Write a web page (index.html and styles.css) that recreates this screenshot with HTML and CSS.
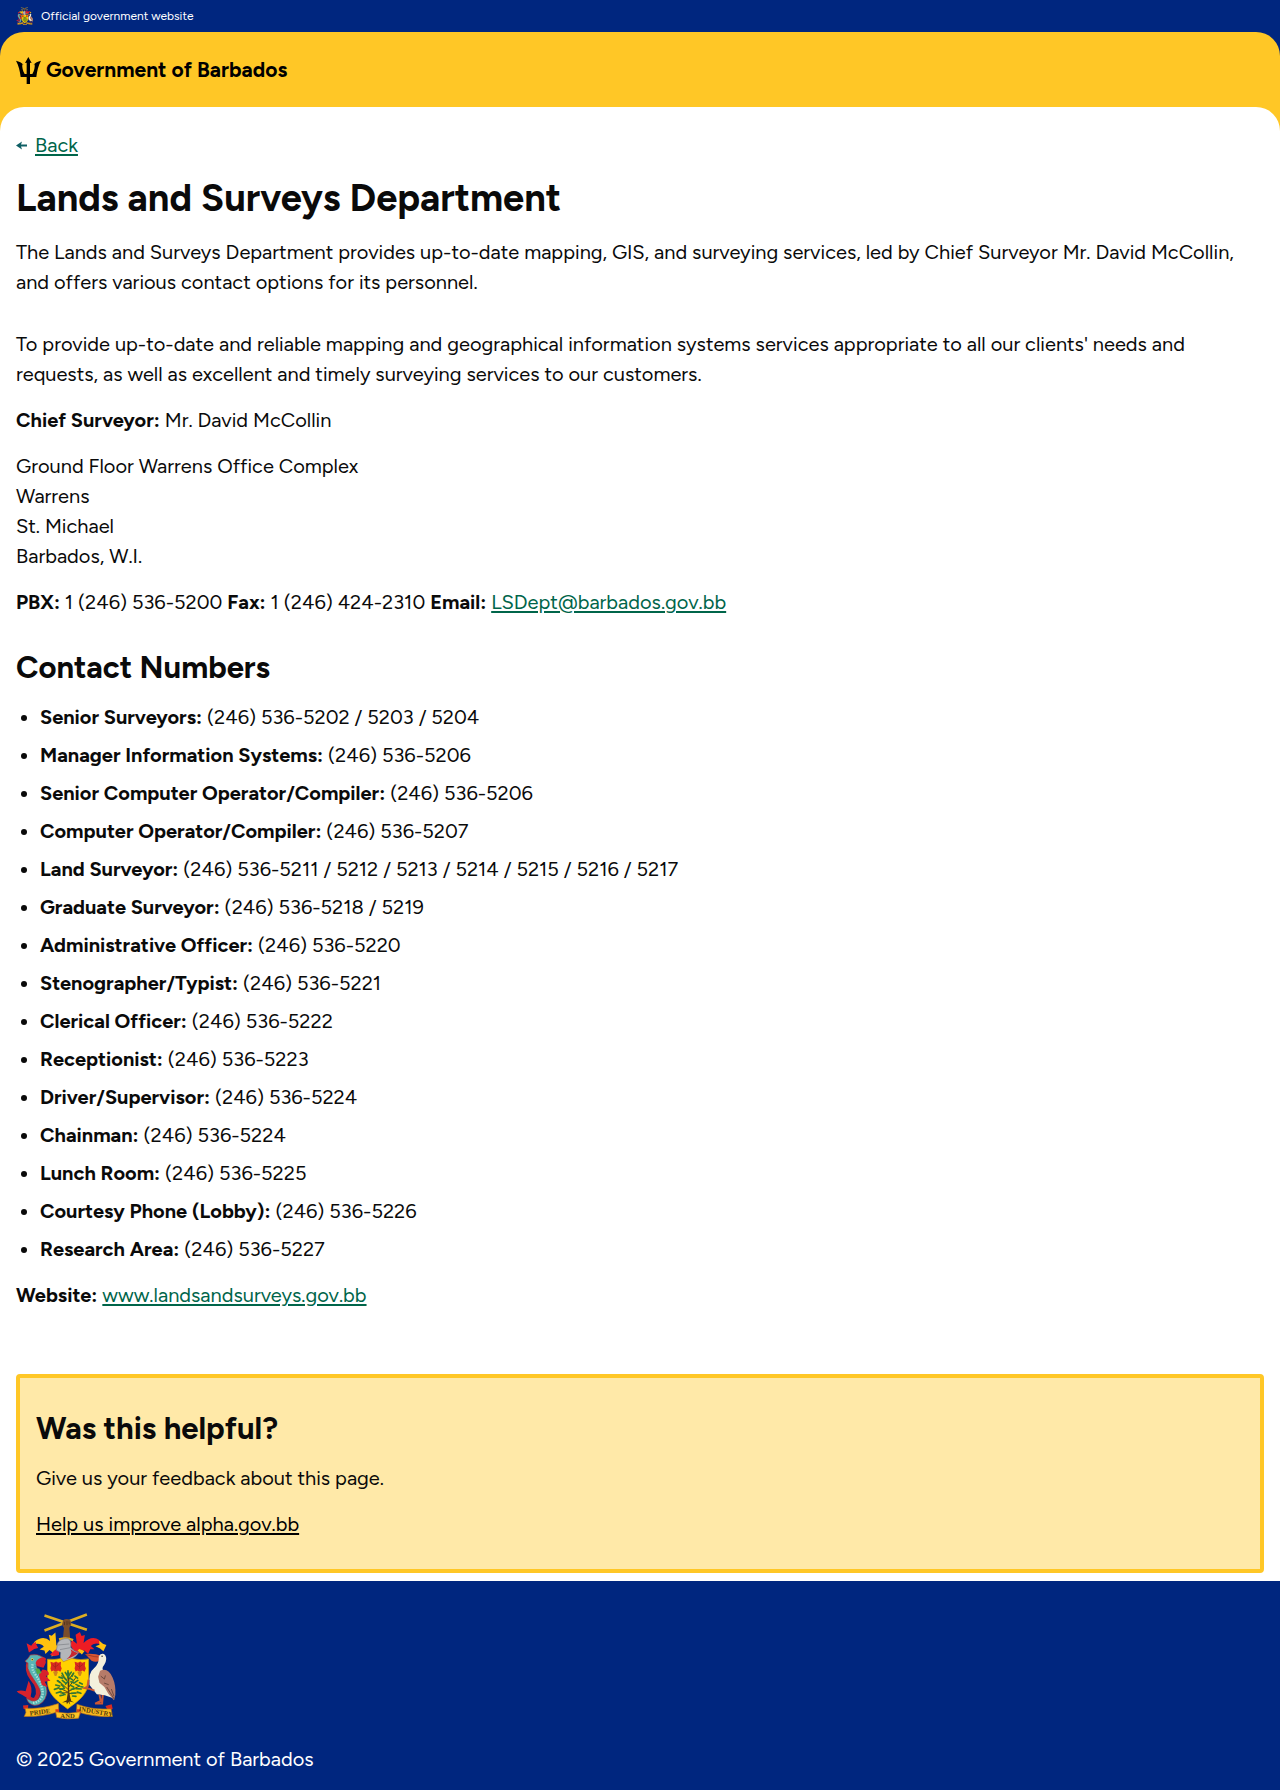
FILE: index.html
```html
<!DOCTYPE html>
<html lang="en">
<head>
<meta charset="utf-8">
<meta name="viewport" content="width=device-width, initial-scale=1">
<title>Lands and Surveys Department</title>
<link rel="stylesheet" href="styles.css">
</head>
<body>
<div class="official">
  <svg class="official-crest" viewBox="48 40 302 322" aria-hidden="true"><use href="#crest"/></svg>
  <span>Official government website</span>
</div>
<div class="header-wrap">
  <header class="header">
    <a class="brand" href="#">
      <svg class="trident" viewBox="0 0 75 81" aria-hidden="true">
        <path d="M37 0 L47 18 L42 17 V51 H49 C55 42 57 31 56 22 L52 24 C58 17 65 13 75 11 C67 26 63 42 61 60 H42 V81 H32 V60 H14 C12 42 8 26 0 11 C10 13 17 17 23 24 L19 22 C18 31 20 42 26 51 H32 V17 L27 18 Z"/>
      </svg>
      <span>Government of Barbados</span>
    </a>
  </header>
</div>
<div class="main-wrap">
  <main class="main">
    <nav class="back">
      <svg class="back-arrow" viewBox="0 0 11 9" aria-hidden="true"><path d="M0 4.5 L6 0.5 L5 3.5 H11 V5.5 H5 L6 8.5 Z"/></svg>
      <a href="#">Back</a>
    </nav>
    <h1>Lands and Surveys Department</h1>
    <p class="lead">The Lands and Surveys Department provides up-to-date mapping, GIS, and surveying services, led by Chief Surveyor Mr. David McCollin, and offers various contact options for its personnel.</p>
    <p>To provide up-to-date and reliable mapping and geographical information systems services appropriate to all our clients' needs and requests, as well as excellent and timely surveying services to our customers.</p>
    <p><strong>Chief Surveyor:</strong> Mr. David McCollin</p>
    <p>Ground Floor Warrens Office Complex<br>Warrens<br>St. Michael<br>Barbados, W.I.</p>
    <p><strong>PBX:</strong> 1 (246) 536-5200 <strong>Fax:</strong> 1 (246) 424-2310 <strong>Email:</strong> <a href="mailto:LSDept@barbados.gov.bb">LSDept@barbados.gov.bb</a></p>
    <h2 class="section-title">Contact Numbers</h2>
    <ul class="contacts">
      <li><strong>Senior Surveyors:</strong> (246) 536-5202 / 5203 / 5204</li>
      <li><strong>Manager Information Systems:</strong> (246) 536-5206</li>
      <li><strong>Senior Computer Operator/Compiler:</strong> (246) 536-5206</li>
      <li><strong>Computer Operator/Compiler:</strong> (246) 536-5207</li>
      <li><strong>Land Surveyor:</strong> (246) 536-5211 / 5212 / 5213 / 5214 / 5215 / 5216 / 5217</li>
      <li><strong>Graduate Surveyor:</strong> (246) 536-5218 / 5219</li>
      <li><strong>Administrative Officer:</strong> (246) 536-5220</li>
      <li><strong>Stenographer/Typist:</strong> (246) 536-5221</li>
      <li><strong>Clerical Officer:</strong> (246) 536-5222</li>
      <li><strong>Receptionist:</strong> (246) 536-5223</li>
      <li><strong>Driver/Supervisor:</strong> (246) 536-5224</li>
      <li><strong>Chainman:</strong> (246) 536-5224</li>
      <li><strong>Lunch Room:</strong> (246) 536-5225</li>
      <li><strong>Courtesy Phone (Lobby):</strong> (246) 536-5226</li>
      <li><strong>Research Area:</strong> (246) 536-5227</li>
    </ul>
    <p><strong>Website:</strong> <a href="#">www.landsandsurveys.gov.bb</a></p>
    <section class="feedback">
      <h2>Was this helpful?</h2>
      <p>Give us your feedback about this page.</p>
      <p><a href="#">Help us improve alpha.gov.bb</a></p>
    </section>
  </main>
</div>
<footer class="footer">
  <svg class="footer-crest" viewBox="48 40 302 322" role="img" aria-label="Coat of arms of Barbados">
    <g id="crest">
      <!-- crossed canes and arm -->
      <path d="M134 47 L262 90 M262 44 L134 92" stroke="#dcae23" stroke-width="8"/>
      <path d="M190 62 q10 -9 23 0 l2 11 l-6 12 l3 36 h-23 l4 -36 l-6 -10z" fill="#7a4d2b"/>
      <path d="M195 66 l-1 10 M202 64 v12 M208 65 l1 9" stroke="#402a1c" stroke-width="2"/>
      <!-- mantling -->
      <path d="M183 121 L170 138 L167 98 L156 108 L147 105 L151 124 Q130 105 104 126 L98 135 Q122 128 132 141 L119 150 L134 153 L137 163 L149 151 L158 158 L155 171 L174 164 L182 143 Z" fill="#ffc20e"/>
      <path d="M108 127 Q98 129 94 138 L80 131 L87 159 L103 148 L115 145 L109 134 Z M164 153 L178 143 L178 166 Q160 173 151 165 Z" fill="#e8202b"/>
      <path d="M218 122 L232 132 L228 105 L241 97 L246 109 L256 106 L252 130 Q277 105 299 121 L307 135 Q283 126 274 139 L285 149 L272 149 L266 163 L253 151 L239 162 L221 151 L211 134 Z" fill="#ed1c24"/>
      <path d="M299 123 Q309 130 310 132 L321 136 L312 155 L302 147 L288 140 L300 135 Z M239 148 L255 154 L247 165 L234 153 Z" fill="#ffc20e"/>
      <path d="M177 116 Q200 108 222 118 L219 125 Q199 116 180 125 Z" fill="#e3a91b"/>
      <!-- helmet -->
      <path d="M174 130 Q184 115 205 117 Q216 120 213 143 Q224 158 238 158 Q225 180 190 187 Q179 180 183 159 L170 152 Z" fill="#b4b6ba" stroke="#808287" stroke-width="2"/>
      <path d="M175 136 l34 -3 M181 150 l32 -6" fill="none" stroke="#7b7e84" stroke-width="2"/>
      <path d="M213 148 Q224 159 237 159 Q224 171 200 179 Q221 164 213 148" fill="#c72830"/>
      <!-- shield -->
      <path d="M143 179 Q166 181 184 177 L191 187 L216 177 Q245 183 267 178 V244 C267 285 235 306 204 329 C174 306 143 286 143 244 Z" fill="#ffd200" stroke="#d99a12" stroke-width="2"/>
      <g id="flower"><path d="M152 187 l10 3 l7 -4 l6 4 l9 -3 l-1 12 l3 8 l-4 10 l-7 -4 l-7 5 l-7 -5 l-6 3 l-3 -9 l2 -9z" fill="#d92a20"/><path d="M158 196 l8 7 l11 -8 M167 190 v19" fill="none" stroke="#9d2519" stroke-width="2"/><path d="M160 217 q8 -4 15 0 l-5 13 h-5z" fill="#cf861c"/></g>
      <use href="#flower" x="73"/>
      <!-- fig tree -->
      <path d="M201 303 Q207 280 204 253 L203 218 H209 V256 Q207 282 215 305 L224 310 L209 307 L212 317 L206 308 L202 315 L200 308 L187 310 Z" fill="#4c3518"/>
      <path d="M205 278 L174 264 M205 270 L176 243 M206 276 L240 260 M206 265 L230 233 M205 248 L184 228 M206 280 L182 281 M206 283 L241 280 M206 242 L222 220" stroke="#594318" stroke-width="3" fill="none"/>
      <path d="M205 214V235M197 219l8 12M215 218l-8 11M187 221l6 12M222 221l-5 10M178 233l10 3M192 232l8 9M211 236l10 7M226 230l8 6M173 244l9 6M188 243l8 7M205 246l-7 8M214 247l9 4M235 243l-9 6M168 257l12 3M185 256l8 7M213 258l9 5M229 255l10 5M240 250l8 4M164 270l13-4M181 270l13-3M215 270l10-2M230 268l15 1M244 262l6 1M170 281l14-4M188 281l8 5M215 282l12-1M233 278l11 4M181 289l10-2M219 290l10 1" stroke="#2f7937" stroke-width="5" stroke-linecap="round"/>
      <!-- dolphin -->
      <path d="M88 182 Q76 212 96 238 Q126 272 108 298 Q98 308 84 292" fill="none" stroke="#c9242f" stroke-width="12"/>
      <path d="M82 190 L75 185 L84 177 L91 166 Q113 161 130 173 L139 179 Q129 186 119 185 Q106 193 112 206 L130 241 Q144 267 141 284 Q133 317 104 319 Q84 315 80 297 L90 302 Q104 310 115 299 Q130 282 112 256 L92 225 Q80 207 84 190 Z" fill="#58b5b5" stroke="#a82c37" stroke-width="2"/>
      <path d="M98 194 Q94 210 107 226 Q132 262 128 288 Q120 311 95 311" fill="none" stroke="#a8e1da" stroke-width="7" stroke-dasharray="4 4"/>
      <path d="M106 196 Q103 212 117 232 Q139 263 134 289" fill="none" stroke="#347f95" stroke-width="3" stroke-dasharray="3 3"/>
      <path d="M84 298 L66 286 Q55 284 50 276 Q63 271 77 276 L86 244 Q100 265 92 292 Z M110 184 Q126 168 137 176 L138 190 L131 205 L113 200 L107 191 Z M128 210 Q150 212 147 226 L138 230 L152 244 L134 247 L144 264 L126 257 L117 226 Z" fill="#d8222c"/>
      <path d="M106 207 L118 207 L125 221 L112 224 Z" fill="#4fa943"/>
      <circle cx="97" cy="180" r="4" fill="#f4d457"/><circle cx="97" cy="180" r="2" fill="#111"/>
      <!-- pelican -->
      <path d="M257 163 Q284 160 308 169 L302 184 Q288 190 276 184 Z" fill="#d95632"/>
      <path d="M259 165 Q286 173 306 173" stroke="#8c2f22" stroke-width="2" fill="none"/>
      <path d="M298 170 Q307 158 317 166 Q325 177 315 195 Q301 211 320 220 Q344 238 344 272 L340 296 Q316 285 292 285 L270 257 Q266 219 283 207 Q300 192 298 170 Z" fill="#f4f0dc"/>
      <path d="M302 214 Q326 203 340 235 Q350 258 348 287 L344 303 Q325 285 315 263 L300 250 L296 232 Z" fill="#b67b69"/>
      <path d="M304 230 l11 9 l3 -11 M314 251 l14 5 M322 263 L345 300 M336 269 L344 291" stroke="#704b40" stroke-width="3" fill="none"/>
      <path d="M300 286 L304 305 L287 313 L308 313 L310 287 M267 241 L264 262 L256 266 L268 268 L285 274" stroke="#cb5734" stroke-width="6" fill="none"/>
      <circle cx="308" cy="170" r="2" fill="#111"/>
      <!-- ribbon -->
      <path d="M69 319 l16 -2 l-1 15 l-13 -3z M318 320 l19 -5 l3 14 l-15 4z" fill="#d82b22"/>
      <path d="M76 327 Q123 331 176 313 L177 337 Q126 354 73 352 L78 340 Z M232 315 Q280 333 335 329 L339 352 Q284 355 231 337 Z" fill="#f8b91e" stroke="#ba7417" stroke-width="2"/>
      <path d="M167 330 L178 330 V346 L168 345 Z M232 330 h11 v15 l-11 2z" fill="#d63a20"/>
      <path d="M168 338 Q204 347 242 338 L237 357 Q203 362 171 355 Z" fill="#ffc425" stroke="#ba7417" stroke-width="2"/>
      <g class="motto"><text x="90" y="349" transform="rotate(-7 90 349)">PRIDE</text><text x="182" y="356">AND</text><text x="237" y="335" transform="rotate(10 237 335)">INDUSTRY</text></g>
    </g>
  </svg>
  <p>© 2025 Government of Barbados</p>
</footer>
</body>
</html>
```
FILE: styles.css
```css
* { box-sizing: border-box; }

body {
  margin: 0;
  font-family: Figtree, Lato, sans-serif;
  font-size: 20px;
  line-height: 30px;
  color: #0a0a0a;
  background: #fff;
}

h1, h2, p, ul { margin: 0; }
svg { display: block; flex: none; }

.official {
  display: flex;
  align-items: center;
  gap: 8px;
  min-height: 32px;
  padding: 0 16px;
  background: #00267f;
  color: #fff;
  font-size: 12px;
  line-height: 16px;
}
.official-crest { width: 17px; height: 18px; }

.header-wrap { background: #00267f; }
.header {
  padding: 23px 16px 22px;
  background: #ffc726;
  border-radius: 24px 24px 0 0;
}
.brand {
  display: inline-flex;
  align-items: center;
  gap: 5px;
  color: #000;
  font-size: 21px;
  font-weight: 700;
  text-decoration: none;
  vertical-align: top;
}
.trident { width: 25px; height: 27px; }

.main-wrap { background: #ffc726; }
.main {
  padding: 23px 16px 8px;
  background: #fff;
  border-radius: 24px 24px 0 0;
}
.main a { color: #00654a; text-underline-offset: 2px; }

.back {
  display: flex;
  align-items: center;
  gap: 8px;
  margin-bottom: 16px;
}
.back-arrow { width: 11px; height: 9px; fill: #0e5f64; }

h1 {
  margin-bottom: 16px;
  font-size: 38px;
  line-height: 45px;
}
h2 {
  margin-bottom: 16px;
  font-size: 31px;
  line-height: 37px;
}
p { margin-bottom: 16px; }
.lead { margin-bottom: 32px; }
.section-title { margin-top: 32px; }

.contacts {
  padding-left: 24px;
  margin-bottom: 16px;
}
.contacts li + li { margin-top: 8px; }

.feedback {
  margin-top: 64px;
  padding: 32px 16px 30px;
  background: #ffe9a8;
  border: 4px solid #ffc726;
  border-radius: 4px;
}
.feedback p:last-child { margin-bottom: 0; }
.main .feedback a { color: #000; }

.footer {
  padding: 32px 16px 16px;
  background: #00267f;
  color: #fff;
}
.footer-crest { width: 100px; height: 107px; margin-bottom: 24px; }
.footer p { margin: 0; }
.motto {
  font-family: "Liberation Serif", serif;
  font-size: 20px;
  font-weight: 700;
  fill: #51390e;
}
```
